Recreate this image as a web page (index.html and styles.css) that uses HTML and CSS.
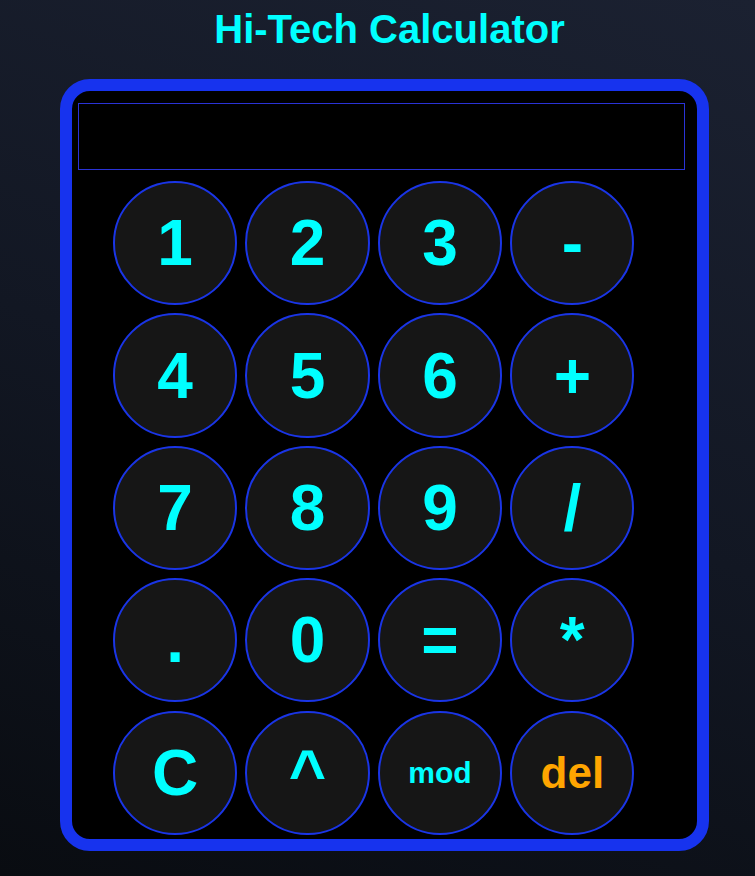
FILE: index.html
```html
<!DOCTYPE html>
<html lang="en">
<head>
<meta charset="utf-8">
<title>Hi-Tech Calculator</title>
<link rel="stylesheet" href="styles.css">
</head>
<body>
<h1 class="title">Hi-Tech Calculator</h1>
<div class="calc">
  <div class="display"></div>
  <div class="keys">
    <button class="key">1</button>
    <button class="key">2</button>
    <button class="key">3</button>
    <button class="key">-</button>
    <button class="key">4</button>
    <button class="key">5</button>
    <button class="key">6</button>
    <button class="key">+</button>
    <button class="key">7</button>
    <button class="key">8</button>
    <button class="key">9</button>
    <button class="key">/</button>
    <button class="key">.</button>
    <button class="key">0</button>
    <button class="key">=</button>
    <button class="key">*</button>
    <button class="key">C</button>
    <button class="key">^</button>
    <button class="key key-mod">mod</button>
    <button class="key key-del">del</button>
  </div>
</div>
</body>
</html>
```

FILE: styles.css
```css
html, body {
  margin: 0;
  padding: 0;
}
body {
  width: 755px;
  height: 876px;
  overflow: hidden;
  background: linear-gradient(200deg, #1b2131 0%, #121723 50%, #090c11 100%);
  font-family: "Liberation Sans", Arial, sans-serif;
}
.title {
  margin: 0;
  padding: 6px 0 0 24px;
  text-align: center;
  font-size: 40px;
  line-height: 46px;
  font-weight: bold;
  color: #00ffff;
}
.calc {
  box-sizing: border-box;
  margin: 27px 0 0 60px;
  width: 649px;
  height: 772px;
  border: 12px solid #1733ee;
  border-radius: 30px;
  background: #000;
  padding: 12px 6px 0 6px;
}
.display {
  box-sizing: border-box;
  width: 607px;
  height: 67px;
  border: 1px solid #2a33d6;
  background: #000;
}
.keys {
  display: grid;
  grid-template-columns: repeat(4, 124.3px);
  grid-auto-rows: 124.3px;
  gap: 8.1px;
  margin: 11px 0 0 35px;
}
.key {
  box-sizing: border-box;
  width: 124.3px;
  height: 124.3px;
  border-radius: 50%;
  border: 2px solid #1a35e6;
  background: #161616;
  color: #00ffff;
  font-family: "Liberation Sans", Arial, sans-serif;
  font-weight: bold;
  font-size: 64px;
  padding: 0;
  display: flex;
  align-items: center;
  justify-content: center;
  line-height: 1;
}
.key-mod {
  font-size: 30px;
}
.key-del {
  font-size: 44px;
  color: #ffa500;
}
```
